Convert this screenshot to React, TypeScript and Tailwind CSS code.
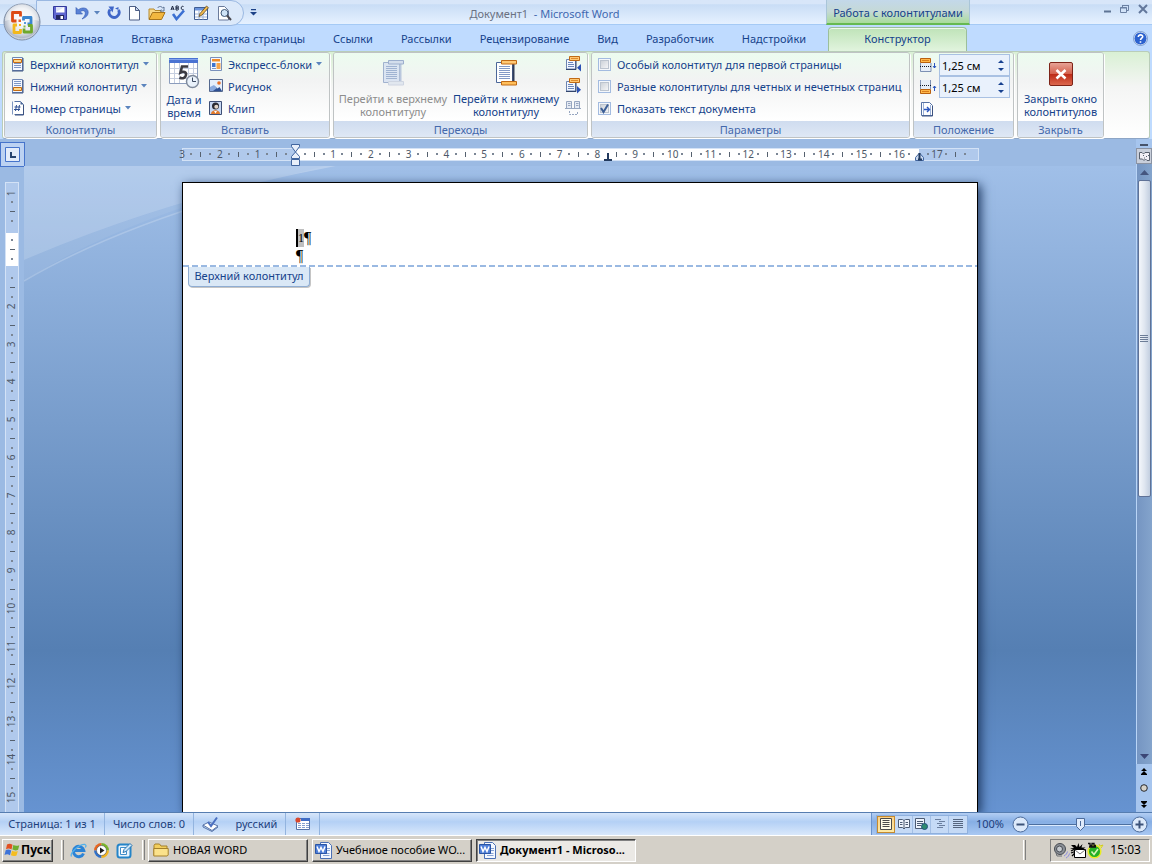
import type { ReactNode } from "react";

const TABS = [
  "Главная",
  "Вставка",
  "Разметка страницы",
  "Ссылки",
  "Рассылки",
  "Рецензирование",
  "Вид",
  "Разработчик",
  "Надстройки",
];

const OPTIONS = [
  { id: "first", label: "Особый колонтитул для первой страницы", checked: false },
  { id: "odd", label: "Разные колонтитулы для четных и нечетных страниц", checked: false },
  { id: "text", label: "Показать текст документа", checked: true },
];

/* ---------- Quick access icons ---------- */

const OfficeLogo = () => (
  <svg width="38" height="38" viewBox="0 0 38 38">
    <defs>
      <radialGradient id="orb" cx="50%" cy="45%" r="55%">
        <stop offset="0" stopColor="#ffffff" />
        <stop offset="0.6" stopColor="#e6e9ee" />
        <stop offset="0.88" stopColor="#b2bac8" />
        <stop offset="1" stopColor="#e4e9f1" />
      </radialGradient>
    </defs>
    <circle cx="19" cy="19" r="18" fill="url(#orb)" stroke="#7c8ba3" />
    <path d="M2 18a17 17 0 0 1 34 0c-9-3-25-3-34 0z" fill="#fff" opacity=".45" />
    <g fill="none" strokeWidth="2.800" strokeLinejoin="round">
      <path d="M17.500 13.500V9.500h-8v8.500h4" stroke="#dd4a14" />
      <path d="M20.500 17.500v-3h7.500v6.500h-3.500" stroke="#3a86cf" />
      <path d="M14 22h-3v7.500h6.500V26" stroke="#f3b81c" />
      <path d="M21 25.500v3.500h7.500v-6.500h-3.500" stroke="#6ea82c" />
    </g>
    <path d="M15.500 16.500h2.500V19h-2.500z" fill="#e2602a" />
    <path d="M21 19h2v2h-2z" fill="#5a9ad8" />
    <path d="M16 21h2v2h-2z" fill="#f0b020" />
    <path d="M20.500 22.500h2v2h-2z" fill="#86b84a" />
  </svg>
);

const SaveIcon = () => (
  <svg width="16" height="16" viewBox="0 0 16 16">
    <path d="M1.500 1.500h13v13H3L1.500 13z" fill="#5f66cf" stroke="#343a9c" />
    <path d="M4 2h8.500v5.500H4z" fill="#fff" />
    <path d="M4 2h8.500L4 7z" fill="#dfe4f8" />
    <path d="M4 10h8v4.500H4z" fill="#23275f" />
    <path d="M8.500 11H11v3H8.500z" fill="#fff" />
  </svg>
);

const UndoIcon = () => (
  <svg width="16" height="16" viewBox="0 0 16 16">
    <path d="M2 2.500V9h6.500L6.300 6.800C8.500 4.800 11.500 5.500 11.300 8.500c-.2 2-1.300 3.500-3.300 5.500 4-1.500 6.200-3.500 6.200-6.800C14.200 2.800 8.500 1.500 4.300 4.800z" fill="#5a82d6" stroke="#3358b0" strokeWidth=".6" />
  </svg>
);

const RedoIcon = () => (
  <svg width="16" height="16" viewBox="0 0 16 16">
    <path d="M4 4.500a5 5 0 1 0 8.500.5" fill="none" stroke="#3f66c8" strokeWidth="2.800" />
    <path d="M7 2.500H1.500L5.500 8.500z" fill="#3f66c8" transform="translate(1 -1)" />
    <path d="M9 3.500l3.500-1.500v3z" fill="#3f66c8" />
  </svg>
);

const NewIcon = () => (
  <svg width="16" height="16" viewBox="0 0 16 16">
    <path d="M3.500 1.500h6l4 4v9.500h-10z" fill="#fff" stroke="#4d5f86" />
    <path d="M9.500 1.500v4h4z" fill="#c9d5ec" stroke="#4d5f86" />
  </svg>
);

const OpenIcon = () => (
  <svg width="18" height="16" viewBox="0 0 18 16">
    <path d="M1 14V4h5l1 1.500h6V8" fill="#f8d888" stroke="#b88a2c" />
    <path d="M1 14.500L4.500 7.500H17L13.500 14.500z" fill="#f2b73f" stroke="#a8751c" />
    <path d="M9.500 3c1.500-2 4-2 5 0l1.500-1v4h-4l1.300-1.500" fill="none" stroke="#5b7294" />
  </svg>
);

const SpellIcon = () => (
  <svg width="17" height="16" viewBox="0 0 17 16">
    <path d="M1 5l1.500-4L4 5M1.500 4h2M6 1v4h1.500a1 1 0 0 0 0-2H6h1.500a1 1 0 0 0 0-2zM13.500 1.500c-3-1.500-3 4.500 0 3" fill="none" stroke="#1b2640" />
    <path d="M3 9l3.500 5L14 5.500" fill="none" stroke="#3c70d2" strokeWidth="2.600" />
  </svg>
);

const TableEditIcon = () => (
  <svg width="17" height="16" viewBox="0 0 17 16">
    <path d="M1.500 2.500h13v12h-13z" fill="#fff" stroke="#3f5d93" />
    <path d="M2 3h12v2.500H2z" fill="#6a93dc" />
    <path d="M2 9h12M2 12h12M6 5.500v9M10 5.500v9" stroke="#9db2d6" />
    <path d="M6 11.500l1-3L13.500 1l2 1.700L9 10z" fill="#f2b94c" stroke="#5e4a24" strokeWidth=".8" />
  </svg>
);

const PreviewIcon = () => (
  <svg width="16" height="16" viewBox="0 0 16 16">
    <path d="M2.500 1.500h6l4 4v9.500h-10z" fill="#fff" stroke="#6b7b9b" />
    <circle cx="8.500" cy="8" r="3.500" fill="#cfe4f7" stroke="#3f5877" />
    <path d="M11 10.500l4 4.500" stroke="#4a4a52" strokeWidth="2" />
  </svg>
);

/* ---------- Ribbon icons ---------- */

const Caret = () => (
  <svg width="6" height="4" viewBox="0 0 6 4" className="ml-1 inline-block shrink-0">
    <path d="M0 0h6L3 3.500z" fill="#5b84bd" />
  </svg>
);

const PageBandIcon = ({ bottom = false }: { bottom?: boolean }) => (
  <svg width="16" height="16" viewBox="0 0 16 16">
    <path d="M2.500 1.500h10v13h-10z" fill="#f4f8ff" stroke="#6d86b4" />
    <path d="M2 15h11V2" fill="none" stroke="#3c5280" />
    <path d="M4 3.500h7M4 5.500h7M4 7.500h7M4 9.500h7M4 11.500h7" stroke="#7d97c6" />
    <path d={bottom ? "M3.500 9.500h8v3h-8z" : "M3.500 3.500h8v3h-8z"} fill="#ffd88a" stroke="#c66c11" />
  </svg>
);

const PageNumberIcon = () => (
  <svg width="16" height="16" viewBox="0 0 16 16">
    <path d="M4.500 1.500h6l3 3v10h-9" fill="#fff" stroke="#5571a3" />
    <path d="M10.500 1.500v3h3z" fill="#4b6796" />
    <path d="M13.500 5v10H5" fill="none" stroke="#3c5280" />
    <path d="M2.500 1.500v13" stroke="#7f97c1" />
    <path d="M6.500 5l-1 6M9.500 5l-1 6M4.500 7h6M4 9.500h6" stroke="#2f4f91" fill="none" />
  </svg>
);

const QuickPartsIcon = () => (
  <svg width="16" height="16" viewBox="0 0 16 16">
    <path d="M2.500 1.500h11v13h-11z" fill="#f4f8ff" stroke="#7990bb" />
    <path d="M4 3h8v2.500H4z" fill="#ef8b28" />
    <path d="M4 7h3.500v4H4z" fill="#3c74cf" />
    <path d="M8.500 7h4v6h-4z" fill="#f6a54b" />
    <path d="M4 12.500h4" stroke="#7f99c9" />
  </svg>
);

const PictureIcon = () => (
  <svg width="16" height="16" viewBox="0 0 16 16">
    <path d="M1.500 1.500h13v12h-13z" fill="#e6eefc" stroke="#54688f" />
    <path d="M2 13l4.500-5 3 2.500 2-1.500 2.500 4z" fill="#2e4f93" />
    <path d="M2 9l4-2 3 3-4 3H2z" fill="#8aa9df" />
    <circle cx="11" cy="5" r="1.800" fill="#e8702a" />
  </svg>
);

const ClipIcon = () => (
  <svg width="16" height="16" viewBox="0 0 16 16">
    <path d="M1.500 1.500h12v13h-12z" fill="#c8d8f3" stroke="#3e4f75" />
    <circle cx="7.500" cy="6" r="3.500" fill="#2b2b33" />
    <circle cx="8.300" cy="6.800" r="2" fill="#e3d5c8" />
    <path d="M3 14c0-5 9-5 9 0z" fill="#e27a2b" />
    <path d="M6 11l1.500 2.500L9 11z" fill="#fff" />
  </svg>
);

const DateTimeIcon = () => (
  <svg width="32" height="32" viewBox="0 0 32 32">
    <path d="M1.500 2.500h28v24h-28z" fill="#fff" stroke="#8c9dbd" />
    <path d="M1 1h29v5H1z" fill="#4a73d2" />
    <path d="M1 2.500h29" stroke="#86a6ee" />
    <path d="M2 11.500h27M2 16.500h27M2 21.500h27M6.500 6v20M11.500 6v20M20.500 6v20M25.500 6v20" stroke="#c5cee0" />
    <path d="M20 9.500h-6l-1.500 6c3-1.500 6-.5 5.500 2.500s-3.500 4-6.500 2.500" fill="none" stroke="#3b3b42" strokeWidth="2.600" />
    <circle cx="24.500" cy="24.500" r="6" fill="#eaf2fb" stroke="#7f8a9c" strokeWidth="1.500" />
    <path d="M24.500 20.500v4h3.500" fill="none" stroke="#3d4a60" />
  </svg>
);

const ScrollPageIcon = ({ dim = false }: { dim?: boolean }) => (
  <svg width="26" height="28" viewBox="0 0 26 28" opacity={dim ? 0.85 : 1}>
    <path d="M3.500 3.500h16v20h-16z" fill={dim ? "#d8e2f2" : "#fff"} stroke={dim ? "#93a7c9" : "#4c6799"} />
    <path d="M20.500 4v20" stroke={dim ? "#b1c0da" : "#303d58"} strokeWidth="2" />
    <path d="M6 7.500h11M6 9.500h11M6 11.500h11M6 13.500h11M6 15.500h11M6 17.500h11M6 19.500h11" stroke={dim ? "#92a8cd" : "#8299c6"} />
    <path d="M8.500 1.500h15v3.500h-15z" fill={dim ? "#cfdaec" : "#ffc873"} stroke={dim ? "#8ea3c7" : "#c06a14"} />
    <path d="M8.500 22.500h15v3.500h-15z" fill={dim ? "#dfe5ef" : "#ffbf5b"} stroke={dim ? "#c8d0df" : "#c06a14"} />
  </svg>
);

const SectionIcon = ({ next = false }: { next?: boolean }) => (
  <svg width="16" height="16" viewBox="0 0 16 16">
    <path d="M1.500 3.500h9v9.500h-9z" fill="#f3f7ff" stroke="#6d84b1" />
    <path d="M1 13.500h10V5" fill="none" stroke="#32456c" />
    <path d="M3 6.500h5M3 8.500h6M3 10.500h6" stroke="#6d87ba" />
    <path d="M4.500.5h10v4h-10z" fill="#ffc873" stroke="#c06a14" />
    <path d="M6 2.500h7" stroke="#e08a2c" />
    <path d={next ? "M12 8v7.500l4-3.700z" : "M16 8v7.500l-4-3.700z"} fill="#2a51b4" />
  </svg>
);

const LinkPrevIcon = () => (
  <svg width="16" height="16" viewBox="0 0 16 16">
    <path d="M1.500 1.500h5v7h-5zM9.500 1.500h5v7h-5z" fill="#e6ebf4" stroke="#97a6c0" />
    <path d="M0 8.500h16M3 3.500h2.500M3 5.500h2.500M11 3.500h2.500M11 5.500h2.500" stroke="#97a6c0" />
    <path d="M4.500 11v3.500h8V11" fill="none" stroke="#97a6c0" strokeDasharray="2 1" />
  </svg>
);

const OffsetIcon = ({ up = false }: { up?: boolean }) => (
  <svg width="18" height="16" viewBox="0 0 18 16">
    <path d="M1 1h11v14H1z" fill="#e6edf8" />
    <path d={up ? "M1.500 10V1M11.500 10V1" : "M1.500 6v8.500H12V6"} fill="none" stroke="#7d90b3" />
    <path d={up ? "M1.500 10.500h10v4h-10z" : "M1.500 1.500h10v4h-10z"} fill="#ffb84a" stroke="#b9610f" />
    <path d={up ? "M3 12.500h7" : "M3 3.500h7"} stroke="#d97c1c" />
    <path d={up ? "M1 6.500h11" : "M1 9.500h11"} stroke="#111827" strokeDasharray="1 1" />
    <path
      d={up ? "M15.500 12V7M14 9l1.500-2L17 9" : "M15.500 6v5M14 9l1.500 2L17 9"}
      fill="none"
      stroke="#2a56c0"
    />
  </svg>
);

const AlignTabIcon = () => (
  <svg width="16" height="16" viewBox="0 0 16 16">
    <path d="M2.500 1.500h8l3 3v10h-11z" fill="#fff" stroke="#5571a3" />
    <path d="M13.500 5v10H3" fill="none" stroke="#3c5280" />
    <path d="M4.500 2v12M11.500 4v10" stroke="#9ab0d8" />
    <path d="M5 8.500h5.500M8 6l2.500 2.500L8 11" fill="none" stroke="#2a56c0" strokeWidth="1.400" />
  </svg>
);

const CloseHeaderIcon = () => (
  <svg width="26" height="26" viewBox="0 0 26 26">
    <defs>
      <linearGradient id="red" x2="0" y2="1">
        <stop offset="0" stopColor="#e8a699" />
        <stop offset="0.5" stopColor="#d4604c" />
        <stop offset="0.52" stopColor="#bd2c18" />
        <stop offset="1" stopColor="#dd6a50" />
      </linearGradient>
    </defs>
    <rect x="1.500" y="1.500" width="23" height="23" rx="1.500" fill="url(#red)" stroke="#7d2418" />
    <path d="M8.500 9l9 8.500M17.500 9l-9 8.500" stroke="#fff" strokeWidth="2.600" />
  </svg>
);

/* ---------- Status bar and taskbar icons ---------- */

const ProofIcon = () => (
  <svg width="18" height="16" viewBox="0 0 18 16">
    <path d="M1 9l6-3 9 4-6 4.500z" fill="#fff" stroke="#5673a8" />
    <path d="M1 9v2l9 4.500 6-4.500" fill="none" stroke="#5673a8" />
    <path d="M6 6l3 4 6-8.500" fill="none" stroke="#4a6fc0" strokeWidth="2" />
  </svg>
);

const MacroIcon = () => (
  <svg width="16" height="14" viewBox="0 0 16 14">
    <path d="M1.500 1.500h13v11h-13z" fill="#fff" stroke="#5673a8" />
    <path d="M6 1h9v3H6z" fill="#3f6cc4" />
    <path d="M3 6.500h3M7 6.500h3M11 6.500h3M3 8.500h3M7 8.500h3M11 8.500h3M3 10.500h3M7 10.500h3M11 10.500h3" stroke="#86a0cf" />
    <circle cx="3" cy="3" r="2.600" fill="#d8482e" />
  </svg>
);

const LinesIcon = () => (
  <svg width="12" height="12" viewBox="0 0 12 12">
    <path d="M.5.5h11v11H.5z" fill="#fffbe6" stroke="#4a4a4a" />
    <path d="M2.500 2.500h7M2.500 4.500h7M2.500 6.500h7M2.500 8.500h7" stroke="#4a4a4a" />
  </svg>
);

const BookIcon = () => (
  <svg width="12" height="12" viewBox="0 0 12 12">
    <path d="M.5 1.500h4l1.500 1 1.500-1h4v8h-4L6 11 4.500 9.500h-4z" fill="#eef4fd" stroke="#4c5b73" />
    <path d="M6 2.500v8M2 4.500h2.500M2 6.500h2.500M7.500 4.500H10M7.500 6.500H10" stroke="#4c5b73" />
  </svg>
);

const WebIcon = () => (
  <svg width="13" height="12" viewBox="0 0 13 12">
    <path d="M.5.5h9v10h-9z" fill="#eef4fd" stroke="#4c5b73" />
    <path d="M2 3.500h6M2 5.500h6M2 7.500h4" stroke="#4c5b73" />
    <circle cx="9.500" cy="8.500" r="3" fill="#2e8a70" stroke="#24517f" />
  </svg>
);

const OutlineIcon = () => (
  <svg width="12" height="12" viewBox="0 0 12 12">
    <path d="M1 1.500h6M5 3.500h6M3 5.500h5M5 7.500h6M3 9.500h6" stroke="#6b7f9f" />
  </svg>
);

const DraftIcon = () => (
  <svg width="12" height="12" viewBox="0 0 12 12">
    <path d="M1 1.500h10M1 3.500h10M1 5.500h10M1 7.500h10M1 9.500h10" stroke="#55657f" />
  </svg>
);

const WindowsFlag = () => (
  <svg width="17" height="16" viewBox="0 0 17 16">
    <path d="M3 2.500c2-1 3.500-1 5.500.3L7.500 7.500c-2-1.200-3.500-1.200-5.500-.3z" fill="#e2501f" />
    <path d="M9.300 3c2 1 3.700 1 6 .2l-1.200 4.600c-2 .9-3.700.7-5.700-.2z" fill="#6fae2d" />
    <path d="M1.700 8.200c2-.9 3.500-.8 5.500.4L6 13.200c-2-1.200-3.500-1.200-5.500-.3z" fill="#3f74d8" />
    <path d="M8 8.700c2 1 3.800 1 5.800.2l-1.300 4.600c-2 .9-3.600.8-5.600-.2z" fill="#f5bd1f" />
  </svg>
);

const IeIcon = () => (
  <svg width="17" height="17" viewBox="0 0 17 17">
    <path d="M13.500 11.500a5.200 5.200 0 1 1 .3-3H5" fill="none" stroke="#2b83d6" strokeWidth="3" />
    <path d="M1.500 14.500C-.5 11 9 2 15 2.500c1.500.5 1 2 .3 3" fill="none" stroke="#53b0ea" strokeWidth="1.300" />
  </svg>
);

const MediaIcon = () => (
  <svg width="17" height="17" viewBox="0 0 17 17">
    <path d="M8.500 1A7.500 7.500 0 0 0 1 8.500h7.500z" fill="#e8641f" />
    <path d="M8.500 1A7.500 7.500 0 0 1 16 8.500H8.500z" fill="#78b42a" />
    <path d="M1 8.500A7.500 7.500 0 0 0 8.500 16V8.500z" fill="#2e70cc" />
    <path d="M16 8.500A7.500 7.500 0 0 1 8.500 16V8.500z" fill="#f2b41f" />
    <circle cx="8.500" cy="8.500" r="5" fill="#fff" stroke="#4c4c4c" strokeWidth=".6" />
    <path d="M7 5.500v6l4.500-3z" fill="#1c1c1c" />
  </svg>
);

const DesktopIcon = () => (
  <svg width="17" height="17" viewBox="0 0 17 17">
    <rect x="1.500" y="2.500" width="13" height="13" rx="2.500" fill="#e9f4fd" stroke="#2484c8" strokeWidth="2" />
    <path d="M4.500 5.500h6v7h-6z" fill="#fff" stroke="#3f8fcb" />
    <path d="M7 10.500l1-3 6-6 2 2-6 6z" fill="#cfe8f9" stroke="#1a6aac" strokeWidth=".9" />
  </svg>
);

const FolderIcon = () => (
  <svg width="16" height="14" viewBox="0 0 16 14">
    <path d="M1 12.500V2.500L2 1h4.500l1.500 2h6v2" fill="#f3cf5d" stroke="#a5812a" />
    <path d="M.8 12.800V5.500h14.400v6.500l-1 1H.8z" fill="#fbe28b" stroke="#a5812a" />
  </svg>
);

const WordIcon = () => (
  <svg width="17" height="17" viewBox="0 0 17 17">
    <path d="M5.500.5h8l3 3v13h-11z" fill="#f4f8ff" stroke="#4b70b4" />
    <path d="M8 11.500h6.500M8 13.500h6.500M12 6.500h3M12 8.500h3" stroke="#88a3d3" />
    <path d="M.5 2.500h11v9H.5z" fill="#4f7fd8" stroke="#2a55a5" />
    <path d="M2 4.500l2 5 2-4 2 4 2-5" fill="none" stroke="#fff" strokeWidth="1.500" />
  </svg>
);

const SpeakerIcon = () => (
  <svg width="17" height="17" viewBox="0 0 17 17">
    <circle cx="7" cy="7" r="5.500" fill="#8b9097" stroke="#474b52" />
    <circle cx="6.500" cy="7" r="3" fill="#c5cad0" stroke="#474b52" />
    <path d="M3 11l1 3h5" fill="none" stroke="#6a6e74" />
    <path d="M11 14c2-1 3-2.500 3.500-4.500M13 16c2-1 3-2.500 3.500-4.500" fill="none" stroke="#8a8ae0" />
  </svg>
);

const BatIcon = () => (
  <svg width="17" height="17" viewBox="0 0 17 17">
    <path d="M5 3l2 2 1.500-4 1 4 3-3-1 3.500h4L12 8H5L0 6.500 4 6 1 3z" fill="#000" />
    <path d="M5 7L1 9M5 9.500l-4 1.500M5 11l-3 3" fill="none" stroke="#000" strokeWidth="1.300" />
    <path d="M4.500 7.500h11v8h-11z" fill="#fff" stroke="#000" />
    <path d="M5 8l5 4 5-4" fill="none" stroke="#777" />
  </svg>
);

const GreenIcon = () => (
  <svg width="17" height="17" viewBox="0 0 17 17">
    <circle cx="7.500" cy="9.500" r="6.300" fill="#24b026" stroke="#e9ec23" strokeWidth="1.500" />
    <path d="M1 1.500h2v2h2v-2h2v2h2M2 5h7" fill="none" stroke="#111" strokeWidth="1.300" />
    <path d="M12 2l1 2 3-1-2 3" fill="#f5f06a" stroke="#d3cf20" />
    <path d="M4.500 9.500l2.500 3L11 7" fill="none" stroke="#d8f5b8" strokeWidth="1.600" />
  </svg>
);

/* ---------- Small building blocks ---------- */

const Group = ({ title, width, children }: { title: string; width: string; children: ReactNode }) => (
  <section
    className={`flex shrink-0 flex-col overflow-hidden rounded-[3px] border border-[#bfc3c4] shadow-[1px_1px_0_#fff] ${width}`}
  >
    <div className="flex h-[68px] shrink-0 bg-linear-to-b from-[#ecfcef] via-[#f2f3f3] via-40% to-white">{children}</div>
    <h2 className="flex h-4 shrink-0 items-center justify-center bg-linear-to-b from-[#cfdcef] to-[#dfe8f5] text-[#4468ab]">{title}</h2>
  </section>
);

const RowButton = ({ icon, label, caret = false }: { icon: ReactNode; label: string; caret?: boolean }) => (
  <button className="flex h-[22px] items-center whitespace-nowrap text-left">
    <span className="mr-1 shrink-0">{icon}</span>
    {label}
    {caret && <Caret />}
  </button>
);

const Spin = ({ id, label, icon }: { id: string; label: string; icon: ReactNode }) => (
  <div className="flex h-[22px] items-center">
    <label htmlFor={id} aria-label={label} className="mr-0.5">
      {icon}
    </label>
    <div className="flex h-[22px] w-[71px] items-center border border-[#a9c1e3] bg-[#e9f1fc]">
      <input id={id} defaultValue="1,25 см" className="w-0 flex-1 bg-transparent pl-0.5 text-black outline-none" />
      <div className="flex w-4 flex-col items-center gap-[5px]">
        <button aria-label="Больше">
          <svg width="6" height="3" viewBox="0 0 6 3" className="block">
            <path d="M0 3h6L3 0z" fill="#17418f" />
          </svg>
        </button>
        <button aria-label="Меньше">
          <svg width="6" height="3" viewBox="0 0 6 3" className="block">
            <path d="M0 0h6L3 3z" fill="#17418f" />
          </svg>
        </button>
      </div>
    </div>
  </div>
);

// One mark per quarter centimetre: a number, a dot, a half-way tick, a dot.
const marks = (from: number, to: number) =>
  Array.from({ length: (to - from) * 4 + 1 }, (_, i) => {
    const quarter = i % 4;
    const value = Math.abs(from + Math.floor(i / 4));
    return quarter === 0 ? String(value) : quarter === 2 ? "|" : ".";
  });

// Marks under the indent and tab markers are left out.
const H_MARKS = marks(-3, 18).map((m, i) => (i === 12 || i === 45 || i === 78 || i === 84 ? "" : m));
const V_MARKS = marks(-1, 15).map((m, i) => (i === 4 || i === 8 ? "" : m));

const Mark = ({ value, vertical = false }: { value: string; vertical?: boolean }) => {
  if (value === ".") return <i className="size-[2px] shrink-0 bg-[#7b8695]" />;
  if (value === "|")
    return <i className={vertical ? "h-px w-[5px] shrink-0 bg-[#56616f]" : "h-[5px] w-px shrink-0 bg-[#56616f]"} />;
  return <span className={vertical ? "-rotate-90" : ""}>{value}</span>;
};

const HorizontalRuler = () => (
  <div className="relative h-[13px] w-[797px] shrink-0 text-[10px] text-[#4d5868]">
    <div className="absolute inset-0 flex border border-[#d3e2f6] bg-[#b0c9ec]">
      <div className="w-[113px]" />
      <div className="w-[623px] bg-white" />
    </div>
    <div className="absolute inset-0 flex items-center justify-between pr-1">
      {H_MARKS.map((m, i) => (
        <span key={i} className="flex w-0 items-center justify-center">
          <Mark value={m} />
        </span>
      ))}
    </div>
    <svg width="9" height="22" viewBox="0 0 9 22" className="absolute -top-1 left-[109px]">
      <path d="M.5.500h8v2L4.500 8 .5 2.500zM.5 14.500v-2L4.500 8l4 4.500v2zM.5 15.500h8v6h-8z" fill="#e8effa" stroke="#41659f" />
    </svg>
    <svg width="8" height="8" viewBox="0 0 8 8" className="absolute top-[5px] left-[422px]">
      <path d="M3 0h2v6h3v2H0V6h3z" fill="#223a5e" />
    </svg>
    <svg width="9" height="9" viewBox="0 0 9 9" className="absolute top-1 left-[733px]">
      <path d="M.5 8.500v-3l4-4.500 4 4.500v3z" fill="#c9d8ee" stroke="#41659f" />
      <path d="M4.500 1v7.500M3 7.500h4" stroke="#223a5e" strokeWidth="2" />
    </svg>
  </div>
);

const VerticalRuler = () => (
  <div className="relative mx-[5px] mt-4 flex flex-1 text-[10px] text-[#4d5868]">
    <div className="absolute inset-0 border border-b-0 border-[#d3e2f6] bg-[#b0c9ec] pt-[50px]">
      <div className="h-[33px] bg-white" />
    </div>
    <div className="relative flex flex-1 flex-col items-center justify-between pt-[11px] pb-[15px]">
      {V_MARKS.map((m, i) => (
        <span key={i} className="flex h-0 items-center justify-center">
          <Mark value={m} vertical />
        </span>
      ))}
    </div>
  </div>
);

/* ---------- Window parts ---------- */

const TitleBar = () => (
  <header className="relative flex h-[25px] shrink-0 border-b border-[#a5caf5] bg-linear-to-b from-[#d8e6f9] from-15% via-[#c9ddf6] via-20% to-[#e6f1ff]">
    <button aria-label="Office" className="absolute top-[3px] left-[3px] z-10">
      <OfficeLogo />
    </button>
    <div className="ml-9 flex h-[26px] w-[208px] shrink-0 items-center rounded-r-full border border-[#9ab8e2] bg-[#dce9fa] pl-[15px] text-[#4d73b5]">
      <button aria-label="Сохранить"><SaveIcon /></button>
      <button aria-label="Отменить" className="ml-1.5"><UndoIcon /></button>
      <Caret />
      <button aria-label="Повторить" className="ml-1.5"><RedoIcon /></button>
      <button aria-label="Создать" className="ml-1"><NewIcon /></button>
      <button aria-label="Открыть" className="ml-1.5"><OpenIcon /></button>
      <button aria-label="Правописание" className="ml-1"><SpellIcon /></button>
      <button aria-label="Таблица" className="ml-1.5"><TableEditIcon /></button>
      <button aria-label="Просмотр" className="ml-1.5"><PreviewIcon /></button>
    </div>
    <button aria-label="Настройка панели" className="mx-1.5">
      <svg width="7" height="7" viewBox="0 0 7 7">
        <path d="M1 0h5v1.300H1zM0 3h7L3.500 6.500z" fill="#1d4288" />
      </svg>
    </button>
    <h1 className="flex flex-1 items-center justify-center pt-1 text-[#3f68b0]">
      <span className="text-[#6a7182]">Документ1</span>&nbsp; - Microsoft Word
    </h1>
    <div className="flex w-[326px] shrink-0 items-start justify-between">
      <div className="flex h-[25px] w-[144px] items-center justify-center border-x border-b-2 border-x-[#a9c5d8] border-b-[#66b951] bg-linear-to-b from-[#c3d8ea] via-[#c5d9d6] to-[#a9dc9a] pt-1">
        Работа с колонтитулами
      </div>
      <div className="flex items-start gap-2 pt-[3px] pr-1">
        <button aria-label="Свернуть">
          <svg width="8" height="12" viewBox="0 0 8 12" className="block"><path d="M0 8.500h7" stroke="#5f7495" strokeWidth="2" /></svg>
        </button>
        <button aria-label="Восстановить">
          <svg width="10" height="12" viewBox="0 0 10 12" className="block">
            <path d="M2.500 4V2.500h6v5H7M.5 4.500h6v5h-6z" fill="none" stroke="#6b80a3" />
            <path d="M0 5h7M2 2.500h7" stroke="#6b80a3" />
          </svg>
        </button>
        <button aria-label="Закрыть">
          <svg width="10" height="12" viewBox="0 0 10 12" className="block"><path d="M1 2l8 8M9 2l-8 8" stroke="#62779b" strokeWidth="2" /></svg>
        </button>
      </div>
    </div>
  </header>
);

const TabRow = () => (
  <nav className="flex h-[26px] shrink-0 bg-[#bfdbff] pl-[46px]">
    <ul className="flex flex-1 items-center pt-0.5">
      {TABS.map((tab) => (
        <li key={tab}>
          <button className="px-3.5 whitespace-nowrap">{tab}</button>
        </li>
      ))}
    </ul>
    <div className="flex w-[326px] shrink-0 items-end justify-between pr-1">
      <button className="ml-0.5 h-6 w-[139px] rounded-t-[4px] border border-b-0 border-[#9cbf9b] bg-linear-to-b from-[#bfe3b8] to-[#e1f4de] shadow-[inset_0_1px_0_#eefae9]">
        Конструктор
      </button>
      <button aria-label="Справка" className="self-center">
        <svg width="15" height="15" viewBox="0 0 15 15" className="block">
          <circle cx="7.500" cy="7.500" r="6.500" fill="#2c62cf" stroke="#dbe6f7" />
          <circle cx="7.500" cy="7.500" r="7" fill="none" stroke="#5f82bd" strokeWidth=".7" />
          <path d="M5.300 6c0-3 4.600-2.700 4.400-.2C9.600 7.200 7.600 7.300 7.500 9M7.500 10.200v1.600" fill="none" stroke="#fff" strokeWidth="1.600" />
        </svg>
      </button>
    </div>
  </nav>
);

const Ribbon = () => (
  <div className="shrink-0 bg-[#bfdbff] px-0.5">
    <div className="flex h-[88px] gap-[3px] rounded-[3px] border border-[#b9cdb9] border-b-[#8ea6c6] bg-linear-to-b from-[#d9f0d4] via-[#f4f5f4] via-40% to-white px-px leading-[13px]">
      <Group title="Колонтитулы" width="w-[153px]">
        <div className="flex flex-col pl-[5px]">
          <RowButton icon={<PageBandIcon />} label="Верхний колонтитул" caret />
          <RowButton icon={<PageBandIcon bottom />} label="Нижний колонтитул" caret />
          <RowButton icon={<PageNumberIcon />} label="Номер страницы" caret />
        </div>
      </Group>
      <Group title="Вставить" width="w-[170px]">
        <button className="flex w-[46px] flex-col items-center pt-1 text-center">
          <DateTimeIcon />
          <span className="mt-1">Дата и время</span>
        </button>
        <div className="flex flex-col pl-px">
          <RowButton icon={<QuickPartsIcon />} label="Экспресс-блоки" caret />
          <RowButton icon={<PictureIcon />} label="Рисунок" />
          <RowButton icon={<ClipIcon />} label="Клип" />
        </div>
      </Group>
      <Group title="Переходы" width="w-[255px]">
        <button className="flex w-[118px] flex-col items-center pt-1.5 text-center text-[#8d8d8d]">
          <ScrollPageIcon dim />
          <span className="mt-[5px] whitespace-nowrap">Перейти к верхнему<br />колонтитулу</span>
        </button>
        <button className="flex w-[108px] flex-col items-center pt-1.5 text-center">
          <ScrollPageIcon />
          <span className="mt-[5px] whitespace-nowrap">Перейти к нижнему<br />колонтитулу</span>
        </button>
        <div className="flex flex-col gap-1.5 pt-[3px] pl-[5px]">
          <button aria-label="Предыдущий раздел"><SectionIcon /></button>
          <button aria-label="Следующий раздел"><SectionIcon next /></button>
          <button aria-label="Как в предыдущем разделе"><LinkPrevIcon /></button>
        </div>
      </Group>
      <Group title="Параметры" width="w-[319px]">
        <div className="flex flex-col pl-1.5">
          {OPTIONS.map((o) => (
            <div key={o.id} className="relative flex h-[22px] items-center">
              <input
                id={o.id}
                type="checkbox"
                defaultChecked={o.checked}
                className="peer size-[13px] appearance-none border border-[#a3bbe0] bg-linear-to-br from-[#c3c9d1] to-white shadow-[inset_0_0_0_1px_#f4f7fb,inset_0_0_0_2px_#bcc4cf]"
              />
              <svg width="13" height="13" viewBox="0 0 13 13" className="pointer-events-none invisible absolute left-0 peer-checked:visible">
                <path d="M3 6l2.500 4L10 2.500" fill="none" stroke="#3d5f97" strokeWidth="2" />
              </svg>
              <label htmlFor={o.id} className="pl-1.5 whitespace-nowrap">{o.label}</label>
            </div>
          ))}
        </div>
      </Group>
      <Group title="Положение" width="w-[101px]">
        <div className="flex flex-col pt-px pl-[5px]">
          <Spin id="top" label="Верхний колонтитул от края" icon={<OffsetIcon />} />
          <Spin id="bottom" label="Нижний колонтитул от края" icon={<OffsetIcon up />} />
          <button aria-label="Вставить табуляцию" className="flex h-[22px] items-center"><AlignTabIcon /></button>
        </div>
      </Group>
      <Group title="Закрыть" width="w-[87px]">
        <button className="flex flex-1 flex-col items-center pt-2 text-center">
          <CloseHeaderIcon />
          <span className="mt-[5px] whitespace-nowrap">Закрыть окно<br />колонтитулов</span>
        </button>
      </Group>
    </div>
  </div>
);

const Page = () => (
  <main className="relative mt-4 w-[796px] border border-b-0 border-black bg-white font-['Liberation_Serif',serif] text-[16px] text-black shadow-[3px_3px_10px_#1f3a63]">
    <div className="flex h-[82px] flex-col justify-end pl-[113px] leading-[18px]">
      <p className="flex h-[18px] items-center">
        <span className="border-l-2 border-black bg-[#bfbfbf] text-[12px]">1</span>¶
      </p>
      <p className="h-[18px]">¶</p>
    </div>
    <svg width="100%" height="2" className="block">
      <path d="M0 1H2000" stroke="#9ab9e2" strokeWidth="2" strokeDasharray="6 3" />
    </svg>
    <div className="ml-[5px] flex h-5 w-[122px] items-center justify-center rounded-b-[4px] border border-t-0 border-[#8fadd3] bg-[#dae8f6] font-['Noto_Sans',sans-serif] text-[11px] text-[#15428b] shadow-[1px_1px_0_#c5c5c5]">
      Верхний колонтитул
    </div>
  </main>
);

const ScrollBar = () => (
  <aside className="flex w-4 shrink-0 flex-col items-center bg-[#a6c5ee]">
    <div className="mt-[5px] h-0.5 w-2 shrink-0 bg-[#46536b]" />
    <button aria-label="Линейка" className="mt-0.5 flex size-4 shrink-0 items-center justify-center border border-[#8b93a3] bg-[#c9cfdb]">
      <svg width="13" height="13" viewBox="0 0 13 13">
        <path d="M1.500 2.500H4L5.500 4 7 2.500h4.500v8H9L7.500 9 6 10.500 4.500 9h-3z" fill="#f1eff6" stroke="#58606e" />
        <path d="M5 5.500h1M8 6.500h1M10 5.500h1M6 8h1" stroke="#58606e" />
      </svg>
    </button>
    <div className="flex w-full flex-1 flex-col items-center border-l border-[#b9d4f6] bg-linear-to-r from-[#7595c2] to-[#84a4cc] pr-px">
      <button aria-label="Вверх" className="flex h-4 shrink-0 items-center">
        <svg width="9" height="5" viewBox="0 0 9 5"><path d="M0 5h9L4.500 0z" fill="#45567f" /></svg>
      </button>
      <div className="flex h-[317px] w-[13px] flex-col items-center justify-center gap-px rounded-[2px] border border-[#5f7297] bg-linear-to-r from-[#f4f7fb] via-[#dfe6f0] to-[#c3cfe0]">
        <i className="h-px w-2 bg-[#6d7d97]" />
        <i className="h-px w-2 bg-[#6d7d97]" />
        <i className="h-px w-2 bg-[#6d7d97]" />
        <i className="h-px w-2 bg-[#6d7d97]" />
      </div>
      <button aria-label="Вниз" className="mt-auto flex h-4 shrink-0 items-center">
        <svg width="9" height="5" viewBox="0 0 9 5"><path d="M0 0h9L4.500 5z" fill="#3b4676" /></svg>
      </button>
    </div>
    <div className="flex h-12 shrink-0 flex-col items-center justify-around">
      <button aria-label="Предыдущая страница">
        <svg width="6" height="7" viewBox="0 0 6 7" className="block"><path d="M0 3h6L3 0zM0 6h6L3 3zM0 6h6v1H0z" fill="#000" /></svg>
      </button>
      <button aria-label="Выбор объекта">
        <svg width="8" height="8" viewBox="0 0 8 8" className="block"><circle cx="4" cy="4" r="3.300" fill="#d6d2c8" stroke="#26282c" /></svg>
      </button>
      <button aria-label="Следующая страница">
        <svg width="6" height="7" viewBox="0 0 6 7" className="block"><path d="M0 0h6v1H0zM0 1h6L3 4zM0 4h6L3 7z" fill="#000" /></svg>
      </button>
    </div>
  </aside>
);

const Workspace = () => (
  <div className="flex min-h-0 flex-1 bg-[#9bbae3]">
    <div className="flex min-w-0 flex-1 flex-col">
      <div className="mt-[3px] flex h-6 shrink-0">
        <button aria-label="Тип табуляции" className="flex size-[25px] shrink-0 items-center justify-center border border-[#4674cb] bg-[#bcd2f2]">
          <svg width="15" height="15" viewBox="0 0 15 15">
            <path d="M.5.500h14v14H.500z" fill="#e3ecfa" stroke="#4674cb" />
            <path d="M6 5v5h5" fill="none" stroke="#27446f" strokeWidth="2" />
          </svg>
        </button>
        <div className="flex flex-1 items-center justify-center"><HorizontalRuler /></div>
      </div>
      <div className="flex min-h-0 flex-1">
        <div className="flex w-6 shrink-0 flex-col"><VerticalRuler /></div>
        <div className="relative flex flex-1 justify-center overflow-hidden bg-linear-to-b from-[#a0bfe8] via-[#557fb3] via-75% to-[#6693d1]">
          <svg width="340" height="130" viewBox="0 0 340 130" className="absolute top-0 left-0">
            <path d="M0 0H312Q150 30 0 94z" fill="#fff" opacity=".2" />
            <path d="M0 94Q150 30 312 0H300Q100 50 0 115z" fill="#fff" opacity=".06" />
            <path d="M0 115Q80 68 200 32" fill="none" stroke="#fff" strokeWidth="1.500" opacity=".2" />
          </svg>
          <Page />
        </div>
      </div>
    </div>
    <ScrollBar />
  </div>
);

const StatusBar = () => (
  <footer className="flex h-[23px] shrink-0 items-stretch border-t border-[#567db0] bg-linear-to-b from-[#d7e6fa] via-[#b4d0f5] via-40% to-[#d9e8fb] text-[#1d3f7c]">
    <button className="w-[105px] border-r border-[#93b4df] whitespace-nowrap">Страница: 1 из 1</button>
    <button className="w-[89px] border-r border-[#93b4df] whitespace-nowrap">Число слов: 0</button>
    <button aria-label="Правописание" className="flex w-[34px] items-center justify-center"><ProofIcon /></button>
    <button className="w-[58px] border-r border-[#93b4df]">русский</button>
    <button aria-label="Макрос" className="flex w-[34px] items-center justify-center border-r border-[#93b4df]"><MacroIcon /></button>
    <div className="ml-auto flex w-[281px] items-center border-l border-[#6b93cc] bg-linear-to-b from-[#b3cef3] via-[#86aee4] via-40% to-[#a9c8f2] pl-1">
      <div className="flex h-[19px] border border-[#8fb0dd] bg-[#c5daf6]">
        <button aria-label="Разметка страницы" className="flex w-[18px] items-center justify-center border border-[#c58a2f] bg-linear-to-b from-[#fbd187] to-[#fdeaa5]"><LinesIcon /></button>
        <button aria-label="Режим чтения" className="flex w-[18px] items-center justify-center border-r border-[#a3bfe5]"><BookIcon /></button>
        <button aria-label="Веб-документ" className="flex w-[18px] items-center justify-center border-r border-[#a3bfe5]"><WebIcon /></button>
        <button aria-label="Структура" className="flex w-[18px] items-center justify-center border-r border-[#a3bfe5]"><OutlineIcon /></button>
        <button aria-label="Черновик" className="flex w-[18px] items-center justify-center"><DraftIcon /></button>
      </div>
      <button className="w-11">100%</button>
      <button aria-label="Уменьшить">
        <svg width="17" height="17" viewBox="0 0 17 17" className="block">
          <circle cx="8.500" cy="8.500" r="7.500" fill="#dce9fa" stroke="#4c6b9b" />
          <path d="M4.500 8.500h8" stroke="#3c5379" strokeWidth="2" />
        </svg>
      </button>
      <div className="relative flex flex-1 items-center justify-center">
        <div className="absolute inset-x-0 h-px bg-[#4c6f9f] shadow-[0_1px_0_#dcebff]" />
        <svg width="9" height="13" viewBox="0 0 9 13" className="relative">
          <path d="M.5.500h8v8l-4 4-4-4z" fill="#dfeafa" stroke="#4c6b9b" />
          <path d="M4.500 3v5" stroke="#4c6b9b" />
        </svg>
      </div>
      <button aria-label="Увеличить" className="mr-1">
        <svg width="17" height="17" viewBox="0 0 17 17" className="block">
          <circle cx="8.500" cy="8.500" r="7.500" fill="#dce9fa" stroke="#4c6b9b" />
          <path d="M4.500 8.500h8M8.500 4.500v8" stroke="#3c5379" strokeWidth="2" />
        </svg>
      </button>
    </div>
  </footer>
);

const Raised = ({ width, children }: { width: string; children: ReactNode }) => (
  <button
    className={`flex h-[23px] shrink-0 items-center border border-t-white border-r-[#404040] border-b-[#404040] border-l-white bg-[#d4d0c8] whitespace-nowrap shadow-[inset_-1px_-1px_0_#808080] [&>svg]:shrink-0 ${width}`}
  >
    {children}
  </button>
);

const Grip = () => <div className="h-5 w-[3px] border-r border-l border-r-[#808080] border-l-white" />;

const Taskbar = () => (
  <footer className="flex h-[29px] shrink-0 items-center border-t border-white bg-[#d4d0c8] px-0.5 text-[11px] text-black">
    <Raised width="w-[51px] pl-px">
      <WindowsFlag />
      <b className="text-[12px]">Пуск</b>
    </Raised>
    <div className="flex w-[95px] items-center gap-1.5 pl-2">
      <Grip />
      <button aria-label="Internet Explorer"><IeIcon /></button>
      <button aria-label="Media Player"><MediaIcon /></button>
      <button aria-label="Свернуть все окна"><DesktopIcon /></button>
      <div className="mr-[3px] ml-auto"><Grip /></div>
    </div>
    <Raised width="w-[160px] gap-1 px-1">
      <FolderIcon />
      НОВАЯ WORD
    </Raised>
    <div className="w-1" />
    <Raised width="w-[160px] gap-1 px-0.5">
      <WordIcon />
      Учебниое пособие WO...
    </Raised>
    <div className="w-1" />
    <button className="flex h-[23px] w-[160px] shrink-0 items-center gap-1 border border-t-[#404040] border-r-white border-b-white border-l-[#404040] bg-[#ebe9e5] px-0.5 font-bold whitespace-nowrap shadow-[inset_1px_1px_0_#808080]">
      <WordIcon />
      Документ1 - Microso...
    </button>
    <div className="mr-6 ml-auto"><Grip /></div>
    <div className="flex h-[23px] items-center border border-t-[#808080] border-r-white border-b-white border-l-[#808080] px-0.5">
      <SpeakerIcon />
      <BatIcon />
      <GreenIcon />
      <span className="px-1.5 text-[12px]">15:03</span>
    </div>
  </footer>
);

export default function App() {
  return (
    <div className="flex h-screen flex-col overflow-hidden font-['Noto_Sans',sans-serif] text-[11px] text-[#15428b]">
      <TitleBar />
      <TabRow />
      <Ribbon />
      <Workspace />
      <StatusBar />
      <Taskbar />
    </div>
  );
}
